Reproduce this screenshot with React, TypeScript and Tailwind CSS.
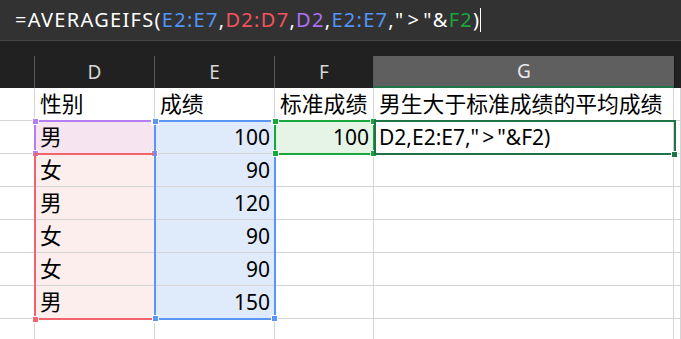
import React from "react";

const FONT = { fontFamily: '"Noto Sans", "Noto Sans CJK SC", sans-serif' };

const COLS = [35, 120, 120, 99, 300, 7];

type Box = { x: number; y: number; w: number; h: number; color: string; handles: boolean };

function RangeBox({ x, y, w, h, color, handles }: Box) {
  const sq = "absolute w-[7px] h-[7px] border border-white";
  return (
    <div className="absolute pointer-events-none" style={{ left: x - 1, top: y - 1, width: w + 2, height: h + 2 }}>
      <div className="absolute inset-0 border-2" style={{ borderColor: color }} />
      {handles && (
        <>
          <div className={sq} style={{ background: color, left: -2, top: -2 }} />
          <div className={sq} style={{ background: color, right: -2, top: -2 }} />
          <div className={sq} style={{ background: color, left: -2, bottom: -2 }} />
          <div className={sq} style={{ background: color, right: -2, bottom: -2 }} />
        </>
      )}
    </div>
  );
}

const rows: { d: string; e: string; f: string; g: string }[] = [
  { d: "性别", e: "成绩", f: "标准成绩", g: "男生大于标准成绩的平均成绩" },
  { d: "男", e: "100", f: "100", g: "FORMULA" },
  { d: "女", e: "90", f: "", g: "" },
  { d: "男", e: "120", f: "", g: "" },
  { d: "女", e: "90", f: "", g: "" },
  { d: "女", e: "90", f: "", g: "" },
  { d: "男", e: "150", f: "", g: "" },
  { d: "", e: "", f: "", g: "" },
];

function cellBg(r: number, c: number) {
  if (c === 1 && r === 1) return "bg-[#f7e4f1]";
  if (c === 1 && r >= 2 && r <= 6) return "bg-[#fdeeee]";
  if (c === 2 && r >= 1 && r <= 6) return "bg-[#dfeafb]";
  if (c === 3 && r === 1) return "bg-[#e6f4e6]";
  return "bg-white";
}

function CellContent({ txt }: { txt: string }) {
  if (txt === "FORMULA") {
    return (
      <span className="text-[21px] whitespace-pre">
        D2,E2:E7,"<span className="mx-[3px]">&gt;</span>"&amp;F2)
      </span>
    );
  }
  const cjk = /[\u4e00-\u9fff]/.test(txt);
  return <span className={cjk ? "text-[21.8px]" : "text-[21px]"}>{txt}</span>;
}

export default function App() {
  return (
    <div className="w-[681px] h-[339px] overflow-hidden bg-[#212121] text-black" style={FONT}>
      {/* formula bar */}
      <div className="h-[41px] bg-[#323232] border-b border-[#454545] flex items-center pl-[15px]">
        <div className="text-[20px] leading-none tracking-[1.3px] flex items-center whitespace-pre text-white">
          <span>=AVERAGEIFS(</span>
          <span className="text-[#5294f7]">E2:E7</span>
          <span>,</span>
          <span className="text-[#f3535c]">D2:D7</span>
          <span>,</span>
          <span className="text-[#b06ef5]">D2</span>
          <span>,</span>
          <span className="text-[#5294f7]">E2:E7</span>
          <span>,"</span>
          <span className="mx-[3px]">&gt;</span>
          <span>"&amp;</span>
          <span className="text-[#17a83c]">F2</span>
          <span>)</span>
          <span className="inline-block w-px h-[24px] bg-white" />
        </div>
      </div>
      <div className="h-[15px] bg-[#212121]" />
      {/* column headers */}
      <div className="flex h-[32px] bg-[#212121] text-[#d6d6d6] text-[19px]">
        <div className="w-[35px] border-r border-[#5a5a5a]" />
        <div className="w-[120px] border-r border-[#5a5a5a] flex items-center justify-center">D</div>
        <div className="w-[120px] border-r border-[#5a5a5a] flex items-center justify-center">E</div>
        <div className="w-[99px] border-r border-[#5a5a5a] flex items-center justify-center">F</div>
        <div className="w-[300px] bg-[#5f5f5f] text-[#e8e8e8] border-b-2 border-[#217346] flex items-center justify-center">G</div>
        <div className="w-[7px] border-l border-[#161616]" />
      </div>
      {/* grid */}
      <div className="relative bg-white">
        {rows.map((row, r) => (
          <div key={r} className="flex h-[33px]">
            {[0, 1, 2, 3, 4, 5].map((c) => {
              const txt = c === 1 ? row.d : c === 2 ? row.e : c === 3 ? row.f : c === 4 ? row.g : "";
              const numeric = /^\d+$/.test(txt);
              return (
                <div
                  key={c}
                  className={`${cellBg(r, c)} border-r border-b border-[#d4d4d4] flex items-center leading-none overflow-visible whitespace-nowrap ${
                    numeric ? "justify-end pr-[4px]" : "justify-start pl-[5px]"
                  }`}
                  style={{ width: COLS[c], flex: "none" }}
                >
                  <CellContent txt={txt} />
                </div>
              );
            })}
          </div>
        ))}
        <RangeBox x={35} y={33} w={120} h={33} color="#b57ef5" handles />
        <RangeBox x={35} y={66} w={120} h={165} color="#f1646b" handles={false} />
        <div className="absolute w-[7px] h-[7px] border border-white bg-[#f1646b]" style={{ left: 32, top: 228 }} />
        <div className="absolute w-[7px] h-[7px] border border-white bg-[#f1646b]" style={{ left: 152, top: 228 }} />
        <RangeBox x={155} y={33} w={120} h={198} color="#5b96f6" handles />
        <RangeBox x={275} y={33} w={99} h={33} color="#17a83c" handles />
        <div
          className="absolute pointer-events-none border-2 border-[#217346]"
          style={{ left: 374, top: 32, width: 302, height: 35 }}
        />
        <div className="absolute w-[7px] h-[7px] border border-white bg-[#217346]" style={{ left: 671, top: 63 }} />
      </div>
    </div>
  );
}
